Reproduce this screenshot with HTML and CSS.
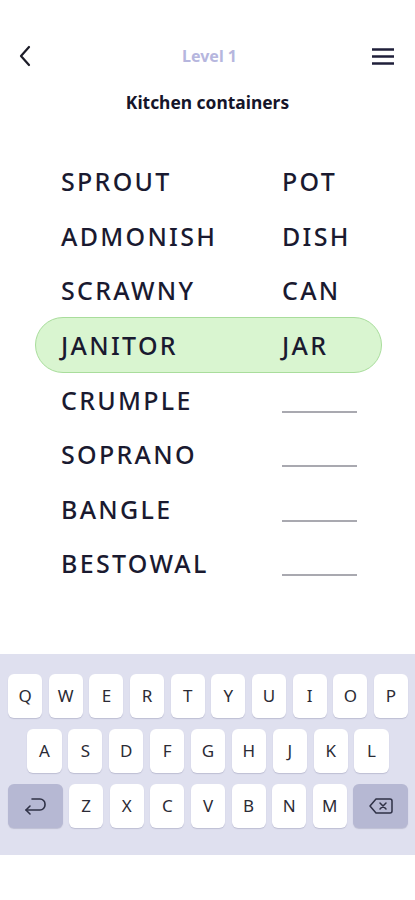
FILE: index.html
```html
<!DOCTYPE html>
<html lang="en">
  <head>
    <meta charset="UTF-8" />
    <meta name="viewport" content="width=device-width, initial-scale=1.0" />
    <title>Level 1 - Kitchen containers</title>
    <link rel="stylesheet" href="styles.css">
  </head>
  <body>
    <div class="app">
      <div class="topbar">
        <button class="icon-btn back" aria-label="Back">
          <svg width="14" height="22" viewBox="0 0 14 22">
            <path d="M11 2 L3 11 L11 20" fill="none" stroke="#1c1c28" stroke-width="2.2" stroke-linecap="round" stroke-linejoin="round" />
          </svg>
        </button>
        <div class="level">Level 1</div>
        <button class="icon-btn menu" aria-label="Menu">
          <svg width="24" height="18" viewBox="0 0 24 18">
            <path d="M1 2.5 H23 M1 9.5 H23 M1 16.5 H23" stroke="#1f1f3a" stroke-width="2.4" />
          </svg>
        </button>
      </div>

      <h1 class="category">Kitchen containers</h1>

      <ul class="words">
        <li class="row"><span class="clue">SPROUT</span><span class="answer">POT</span></li>
        <li class="row"><span class="clue">ADMONISH</span><span class="answer">DISH</span></li>
        <li class="row"><span class="clue">SCRAWNY</span><span class="answer">CAN</span></li>
        <li class="row active"><span class="clue">JANITOR</span><span class="answer">JAR</span></li>
        <li class="row"><span class="clue">CRUMPLE</span><span class="blank"></span></li>
        <li class="row"><span class="clue">SOPRANO</span><span class="blank"></span></li>
        <li class="row"><span class="clue">BANGLE</span><span class="blank"></span></li>
        <li class="row"><span class="clue">BESTOWAL</span><span class="blank"></span></li>
      </ul>

      <div class="keyboard">
        <div class="key-row">
          <div class="key">Q</div><div class="key">W</div><div class="key">E</div><div class="key">R</div><div class="key">T</div>
          <div class="key">Y</div><div class="key">U</div><div class="key">I</div><div class="key">O</div><div class="key">P</div>
        </div>
        <div class="key-row">
          <div class="key">A</div><div class="key">S</div><div class="key">D</div><div class="key">F</div><div class="key">G</div>
          <div class="key">H</div><div class="key">J</div><div class="key">K</div><div class="key">L</div>
        </div>
        <div class="key-row">
          <div class="key special">
            <svg width="26" height="20" viewBox="0 0 26 20">
              <path d="M10 3 H18 A5 5 0 0 1 23 8 V9 A5 5 0 0 1 18 14 H4" fill="none" stroke="#2f3146" stroke-width="1.6" stroke-linecap="round" />
              <path d="M8 10 L4 14 L8 18" fill="none" stroke="#2f3146" stroke-width="1.6" stroke-linecap="round" stroke-linejoin="round" />
            </svg>
          </div>
          <div class="key">Z</div><div class="key">X</div><div class="key">C</div><div class="key">V</div>
          <div class="key">B</div><div class="key">N</div><div class="key">M</div>
          <div class="key special">
            <svg width="26" height="18" viewBox="0 0 26 18">
              <path d="M8 2 H22 A2 2 0 0 1 24 4 V14 A2 2 0 0 1 22 16 H8 L2 9 Z" fill="none" stroke="#2f3146" stroke-width="1.5" stroke-linejoin="round" />
              <path d="M12 6 L18 12 M18 6 L12 12" stroke="#2f3146" stroke-width="1.5" stroke-linecap="round" />
            </svg>
          </div>
        </div>
      </div>
    </div>
  </body>
</html>
```

FILE: styles.css
```css
body {
  margin: 0;
  background: #ffffff;
  font-family: "Noto Sans", "Open Sans", sans-serif;
  color: #1a1a2e;
}
.app {
  width: 415px;
  height: 900px;
  display: flex;
  flex-direction: column;
}
.topbar {
  height: 40px;
  margin-top: 36px;
  padding: 0 20px 0 18px;
  display: flex;
  align-items: center;
  justify-content: space-between;
}
.icon-btn {
  background: none;
  border: none;
  padding: 0;
  display: flex;
  align-items: center;
  width: 26px;
}
.menu {
  justify-content: flex-end;
}
.level {
  font-size: 16px;
  font-weight: 700;
  color: #b6b6de;
  margin-left: 6px;
}
.category {
  margin: 14px 0 0;
  text-align: center;
  font-size: 17.4px;
  font-weight: 700;
  color: #15152a;
  line-height: 24px;
}
.words {
  list-style: none;
  margin: 40px 33px 0 35px;
  padding: 0;
}
.row {
  height: 54.6px;
  box-sizing: border-box;
  display: grid;
  grid-template-columns: 221px 1fr;
  align-items: center;
  padding-left: 25px;
  font-size: 25px;
  font-weight: 500;
  letter-spacing: 2.3px;
  color: #1a1a30;
  border: 1px solid transparent;
  border-radius: 28px;
}
.row.active {
  background: #d9f5d0;
  border-color: #a9dd9c;
  height: 56px;
  margin: -0.7px 0;
}
.blank {
  display: block;
  width: 75px;
  height: 2px;
  background: #a9a9b0;
  margin-top: 24px;
}
.keyboard {
  margin-top: 63px;
  background: #dfe0ef;
  padding: 20px 7px 27px 8px;
  display: flex;
  flex-direction: column;
  gap: 11px;
}
.key-row {
  display: flex;
  justify-content: center;
  gap: 6.6px;
}
.key {
  width: 34.3px;
  height: 44px;
  background: #ffffff;
  border-radius: 6px;
  box-shadow: 0 1px 1px rgba(90, 92, 130, 0.25);
  display: flex;
  align-items: center;
  justify-content: center;
  font-size: 17px;
  color: #2b2b35;
}
.key.special {
  width: 55px;
  background: #b6b8d3;
}
```
